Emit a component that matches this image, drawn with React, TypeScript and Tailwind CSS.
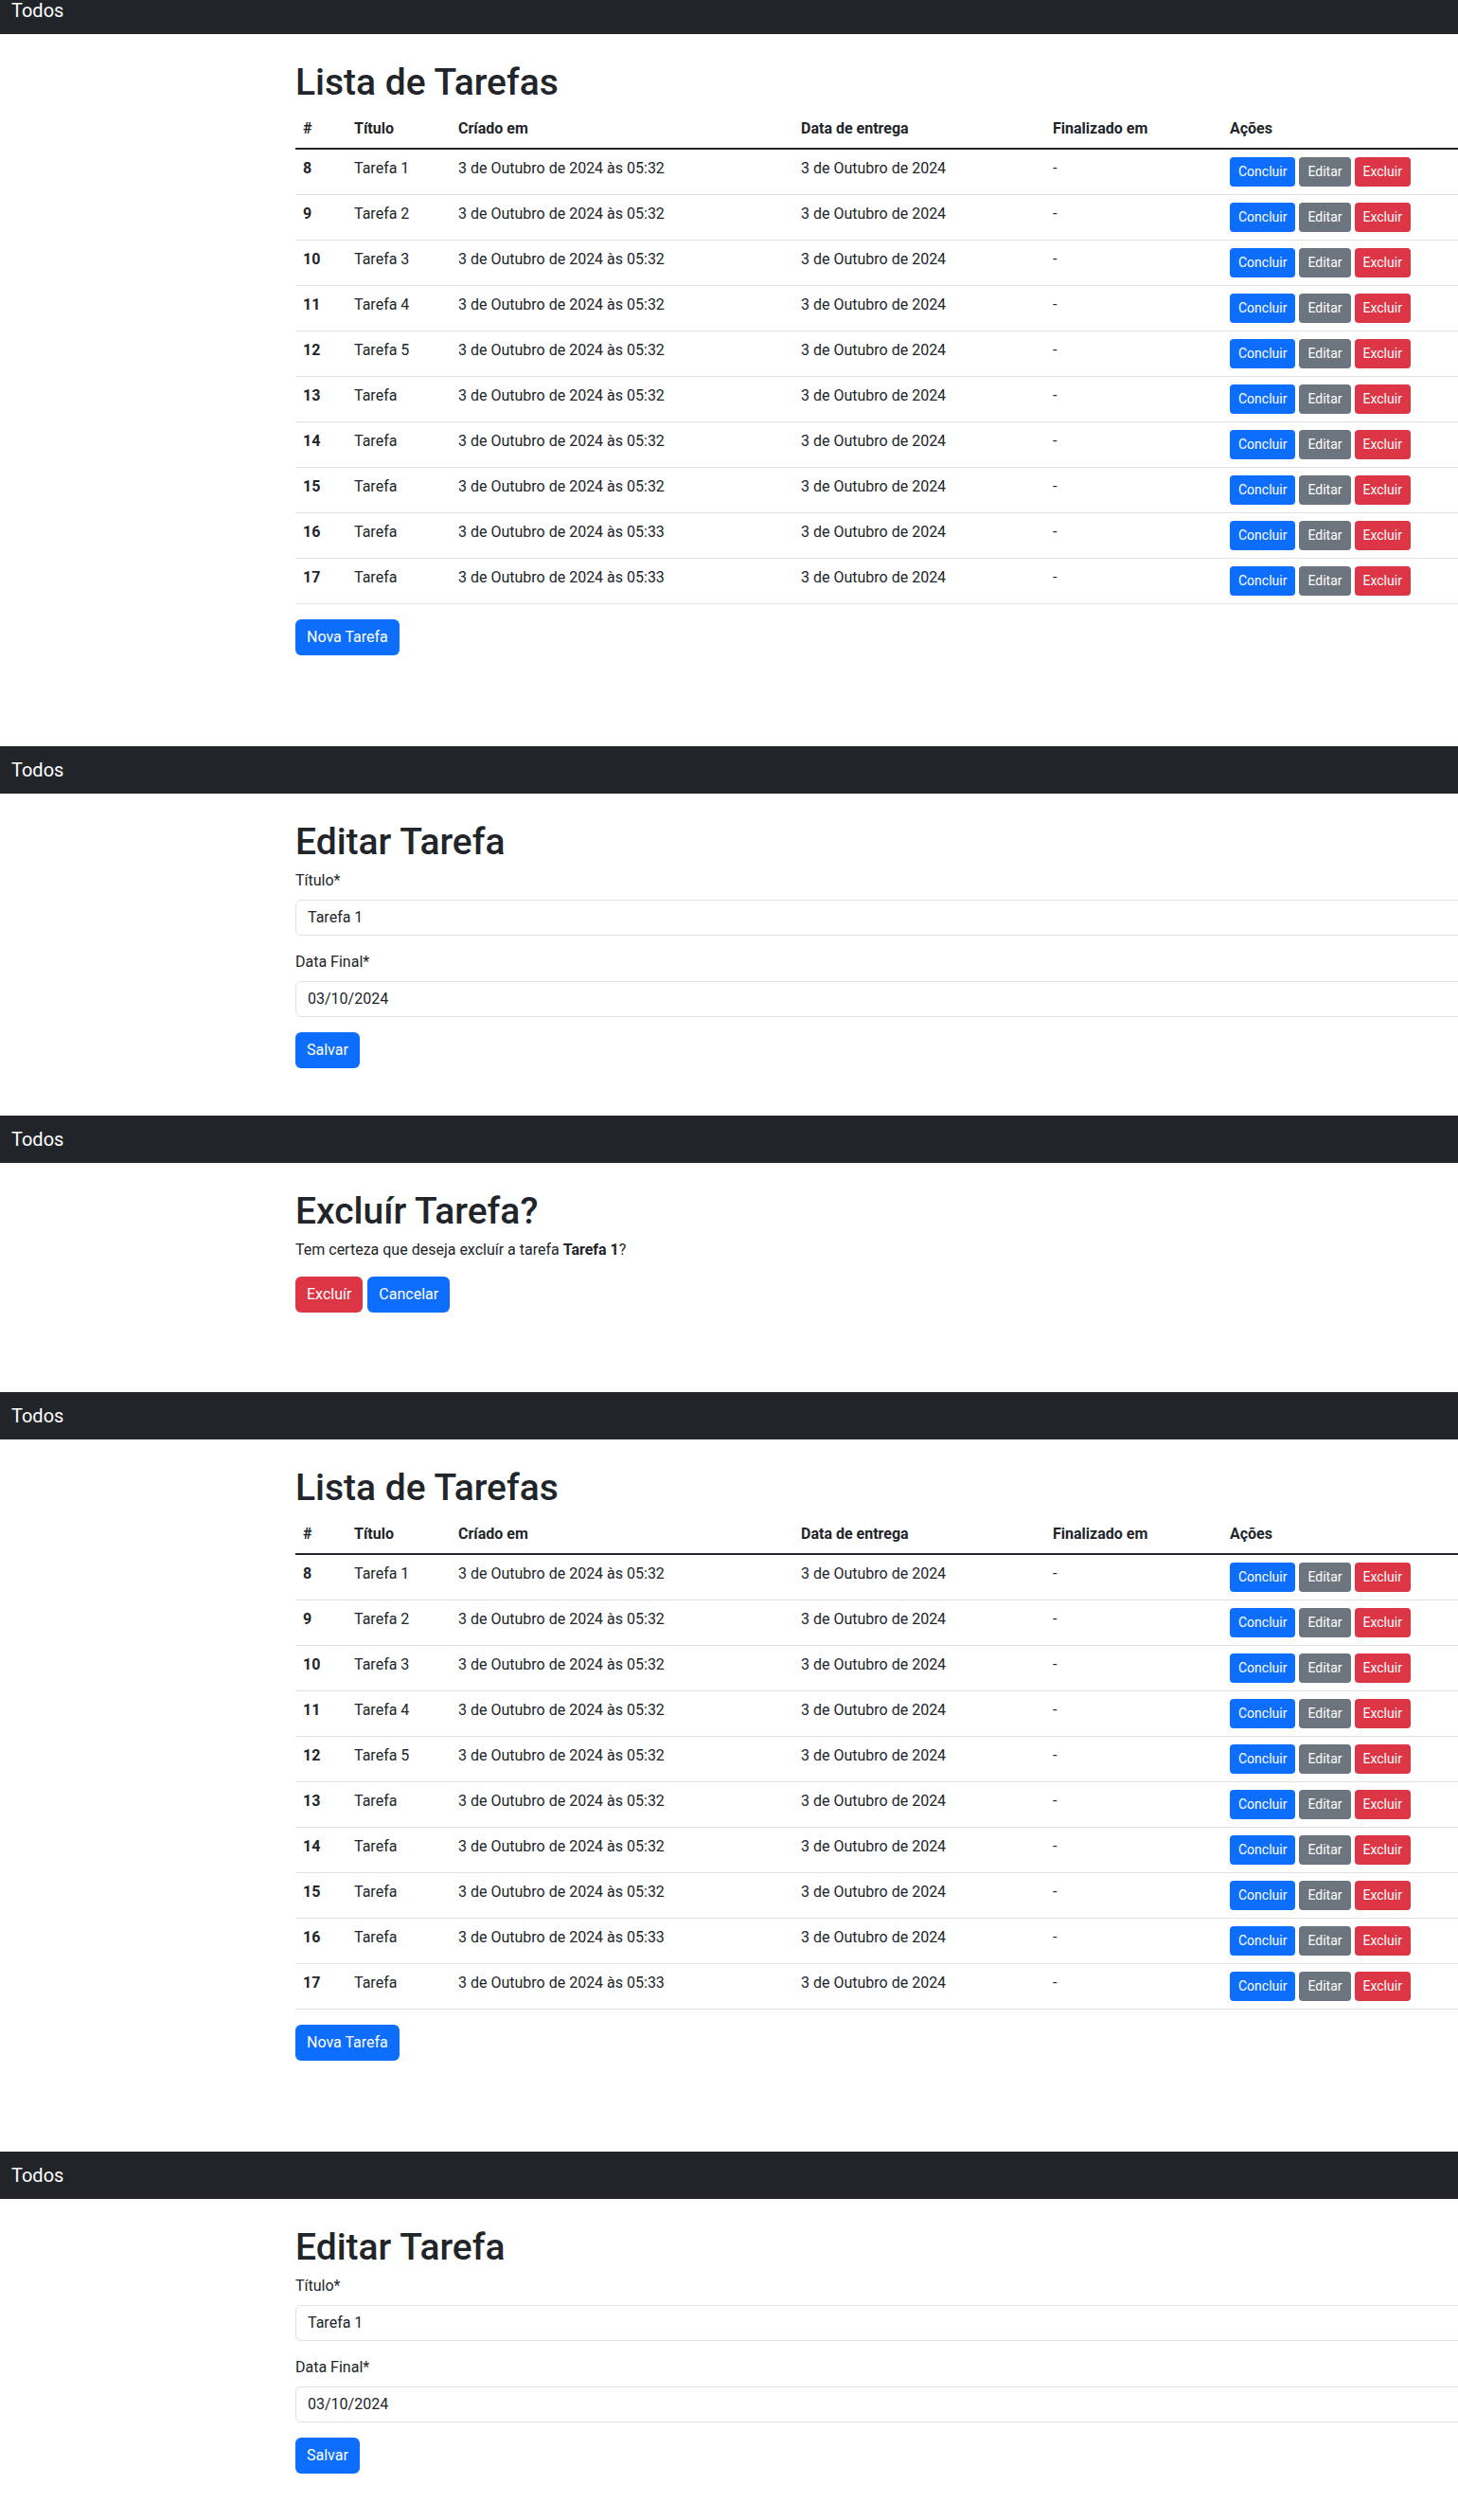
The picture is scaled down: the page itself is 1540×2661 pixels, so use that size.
import React from "react";

const FONT = { fontFamily: 'Roboto, "Liberation Sans", Arial, sans-serif' };

const rows: [number, string, string][] = [
  [8, "Tarefa 1", "05:32"],
  [9, "Tarefa 2", "05:32"],
  [10, "Tarefa 3", "05:32"],
  [11, "Tarefa 4", "05:32"],
  [12, "Tarefa 5", "05:32"],
  [13, "Tarefa", "05:32"],
  [14, "Tarefa", "05:32"],
  [15, "Tarefa", "05:32"],
  [16, "Tarefa", "05:33"],
  [17, "Tarefa", "05:33"],
];

function Navbar() {
  return (
    <div className="h-[50px] bg-[#212529] flex items-center px-3">
      <span className="text-white text-[20px] leading-[30px]">Todos</span>
    </div>
  );
}

function Container({ children }: { children: React.ReactNode }) {
  return (
    <div className="pl-[312px] pt-6">
      <div className="w-[1296px]">{children}</div>
    </div>
  );
}

function Heading({ children }: { children: React.ReactNode }) {
  return (
    <h1 className="text-[39px] leading-[48px] font-medium text-[#212529] mt-[3px] mb-[5px]">
      {children}
    </h1>
  );
}

const smBtn = "h-[31px] px-[9px] rounded text-[14px] leading-[21px] text-white";

function ListPage({ className = "" }: { className?: string }) {
  return (
    <div className={"h-[802px] shrink-0 " + className}>
      <Navbar />
      <Container>
        <Heading>Lista de Tarefas</Heading>
        <table className="w-full border-collapse mb-4 text-[16px] leading-6 text-[#212529]">
          <colgroup>
            <col className="w-[54px]" />
            <col className="w-[110px]" />
            <col className="w-[362px]" />
            <col className="w-[266px]" />
            <col className="w-[187px]" />
            <col />
          </colgroup>
          <thead>
            <tr>
              {["#", "Título", "Críado em", "Data de entrega", "Finalizado em", "Ações"].map((h) => (
                <th
                  key={h}
                  className="text-left font-bold p-2 border-b-2 border-[#212529] align-top"
                >
                  {h}
                </th>
              ))}
            </tr>
          </thead>
          <tbody>
            {rows.map(([id, title, time]) => (
              <tr key={id} className="border-b border-[#dee2e6]">
                <td className="p-2 font-bold align-top">{id}</td>
                <td className="p-2 align-top">{title}</td>
                <td className="p-2 align-top">3 de Outubro de 2024 às {time}</td>
                <td className="p-2 align-top">3 de Outubro de 2024</td>
                <td className="p-2 align-top">-</td>
                <td className="p-2 align-top">
                  <div className="flex gap-1">
                    <button className={smBtn + " bg-[#0d6efd]"}>Concluir</button>
                    <button className={smBtn + " bg-[#6c757d]"}>Editar</button>
                    <button className={smBtn + " bg-[#dc3545]"}>Excluir</button>
                  </div>
                </td>
              </tr>
            ))}
          </tbody>
        </table>
        <button className="h-[38px] px-3 rounded-md text-[16px] leading-6 text-white bg-[#0d6efd]">
          Nova Tarefa
        </button>
      </Container>
    </div>
  );
}

function EditPage({ h }: { h: string }) {
  return (
    <div className={"shrink-0 " + h}>
      <Navbar />
      <Container>
        <Heading>Editar Tarefa</Heading>
        <div className="mb-4">
          <label className="block mb-2 text-[16px] leading-6 text-[#212529]">Título*</label>
          <div className="h-[38px] border border-[#dee2e6] rounded-md px-3 flex items-center text-[16px] text-[#212529]">
            Tarefa 1
          </div>
        </div>
        <div className="mb-4">
          <label className="block mb-2 text-[16px] leading-6 text-[#212529]">Data Final*</label>
          <div className="h-[38px] border border-[#dee2e6] rounded-md px-3 flex items-center text-[16px] text-[#212529]">
            03/10/2024
          </div>
        </div>
        <button className="h-[38px] px-3 rounded-md text-[16px] leading-6 text-white bg-[#0d6efd]">
          Salvar
        </button>
      </Container>
    </div>
  );
}

function DeletePage() {
  return (
    <div className="h-[292px] shrink-0">
      <Navbar />
      <Container>
        <Heading>Excluír Tarefa?</Heading>
        <p className="mb-4 text-[16px] leading-6 text-[#212529]">
          Tem certeza que deseja excluír a tarefa <b className="font-bold">Tarefa 1</b>?
        </p>
        <div className="flex gap-[5px]">
          <button className="h-[38px] px-3 rounded-md text-[16px] leading-6 text-white bg-[#dc3545]">
            Excluír
          </button>
          <button className="h-[38px] px-3 rounded-md text-[16px] leading-6 text-white bg-[#0d6efd]">
            Cancelar
          </button>
        </div>
      </Container>
    </div>
  );
}

export default function App() {
  return (
    <div className="w-full h-[2661px] overflow-hidden bg-white flex flex-col" style={FONT}>
      <ListPage className="-mt-[14px]" />
      <EditPage h="h-[390px]" />
      <DeletePage />
      <ListPage />
      <EditPage h="h-[389px]" />
    </div>
  );
}
